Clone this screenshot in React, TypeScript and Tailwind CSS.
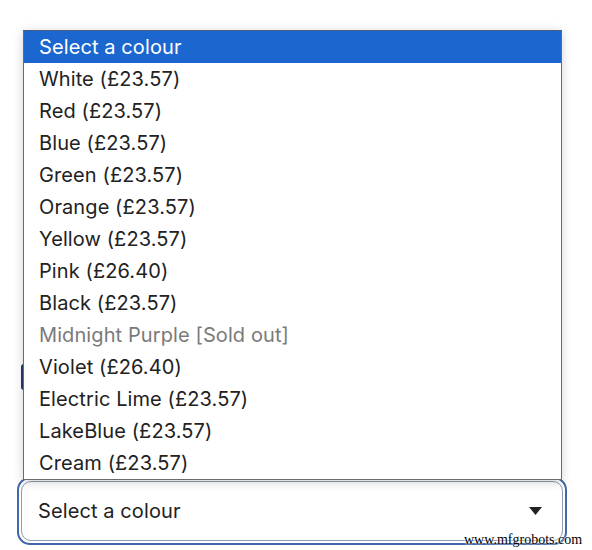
import React from "react";

const options = [
  "White (£23.57)",
  "Red (£23.57)",
  "Blue (£23.57)",
  "Green (£23.57)",
  "Orange (£23.57)",
  "Yellow (£23.57)",
  "Pink (£26.40)",
  "Black (£23.57)",
  "Midnight Purple [Sold out]",
  "Violet (£26.40)",
  "Electric Lime (£23.57)",
  "LakeBlue (£23.57)",
  "Cream (£23.57)",
];

export default function App() {
  return (
    <div
      className="relative w-[592px] h-[550px] bg-white overflow-hidden"
      style={{ fontFamily: "Inter, 'Noto Sans', sans-serif" }}
    >
      <div className="absolute left-[21px] top-[364px] w-[3px] h-[26px] bg-[#233a6b] rounded-l-sm" />
      <div className="pt-[477px] pl-[17px]">
        <div className="w-[550px] h-[68px] rounded-[13px] border-2 border-[#4267ad] p-[2px]">
          <div className="h-full rounded-[10px] border border-[#8f9bb0] flex items-center justify-between pl-[16px] pr-[20px]">
            <span className="text-[20px] text-[#222222] tracking-[0.1px]">Select a colour</span>
            <svg width="13" height="8" viewBox="0 0 13 8">
              <path d="M0 0 H13 L6.5 8 Z" fill="#222" />
            </svg>
          </div>
        </div>
      </div>
      <div className="absolute left-[23px] top-[30px] w-[539px] border border-[#6b6b6b] border-t-[#4a5d80] bg-white shadow-[0_2px_10px_rgba(0,0,0,0.18)]">
        <div className="h-[32px] bg-[#1b66cf] text-white text-[20px] tracking-[0.1px] flex items-center pl-[15px]">
          Select a colour
        </div>
        {options.map((o) => (
          <div
            key={o}
            className={`h-[32px] flex items-center pl-[15px] text-[20px] tracking-[0.1px] ${
              o.includes("Sold out") ? "text-[#7a7a7a]" : "text-[#222222]"
            }`}
          >
            {o}
          </div>
        ))}
      </div>
      <div
        className="absolute left-[464px] top-[529px] text-[14px] text-black"
        style={{
          fontFamily: "'Liberation Serif', serif",
          textShadow: "0 0 2px #fff, 0 0 2px #fff",
        }}
      >
        www.mfgrobots.com
      </div>
    </div>
  );
}
